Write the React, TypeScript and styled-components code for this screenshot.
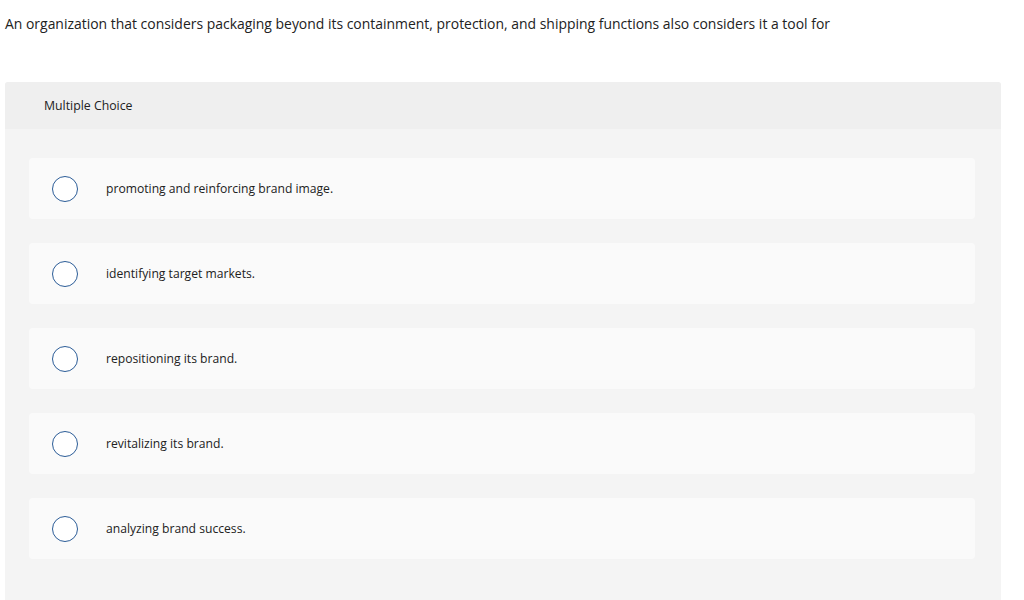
import React from "react";
import styled, {createGlobalStyle} from "styled-components";

const GlobalStyle = createGlobalStyle`
  body {
    margin: 0;
    background: #fff;
    font-family: "Open Sans", "Liberation Sans", sans-serif;
    color: #333;
  }
`;

const Page = styled.div`
  width: 1024px;
  height: 600px;
  overflow: hidden;
`;

const Question = styled.p`
  margin: 0;
  padding: 14px 0 0 5px;
  font-size: 13.95px;
  line-height: 19px;
  color: #222;
`;

const Panel = styled.section`
  margin: 49px 23px 0 5px;
  background: #f4f4f4;
  border-radius: 3px 3px 0 0;
  min-height: 540px;
`;

const PanelHeader = styled.div`
  height: 47px;
  display: flex;
  align-items: center;
  padding-left: 39px;
  background: #efefef;
  border-radius: 3px 3px 0 0;
  font-size: 12.3px;
  color: #222;
`;

const OptionList = styled.ul`
  list-style: none;
  margin: 0;
  padding: 29px 26px 0 24px;
  display: flex;
  flex-direction: column;
  gap: 24px;
`;

const Option = styled.li`
  height: 61px;
  display: flex;
  align-items: center;
  background: #fafafa;
  border-radius: 4px;
`;

const Radio = styled.span`
  width: 24px;
  height: 24px;
  margin-left: 23px;
  border: 1.4px solid #2b5c97;
  border-radius: 50%;
  background: #fff;
  flex-shrink: 0;
`;

const OptionText = styled.span`
  margin-left: 28px;
  font-size: 12.15px;
  color: #222;
`;

const options = [
  "promoting and reinforcing brand image.",
  "identifying target markets.",
  "repositioning its brand.",
  "revitalizing its brand.",
  "analyzing brand success.",
];

export default function App() {
  return <>
    <GlobalStyle/>
    <Page>
      <Question>
        An organization that considers packaging beyond its containment, protection, and shipping functions also considers it a tool for
      </Question>
      <Panel>
        <PanelHeader>Multiple Choice</PanelHeader>
        <OptionList>
          {options.map((text) => (
            <Option key={text}>
              <Radio/>
              <OptionText>{text}</OptionText>
            </Option>
          ))}
        </OptionList>
      </Panel>
    </Page>
  </>
}
